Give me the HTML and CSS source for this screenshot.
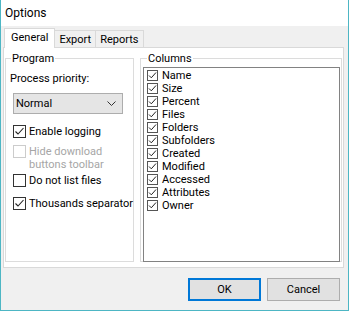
FILE: index.html
```html
<!DOCTYPE html>
<html lang="en">
  <head>
    <meta charset="UTF-8" />
    <meta name="viewport" content="width=device-width, initial-scale=1.0" />
    <link rel="stylesheet" href="styles.css">
  </head>
  <body>
    <div class="window">
      <div class="titlebar">Options</div>

      <div class="client">
        <div class="tabs">
          <div class="tab active">General</div>
          <div class="tab">Export</div>
          <div class="tab">Reports</div>
        </div>

        <div class="page">
          <fieldset class="group program">
            <legend>Program</legend>
            <div class="label">Process priority:</div>
            <div class="combo">
              <span>Normal</span>
              <svg width="9" height="5" viewBox="0 0 9 5"><polyline points="0.5,0.5 4.5,4.5 8.5,0.5" fill="none" stroke="#333" stroke-width="1"/></svg>
            </div>

            <div class="check c-logging">
              <span class="box"><svg width="11" height="11" viewBox="0 0 11 11"><polyline points="1.5,5.5 4,8 9.5,2" fill="none" stroke="#222" stroke-width="1.1"/></svg></span>
              <span>Enable logging</span>
            </div>
            <div class="check disabled c-hide">
              <span class="box"></span>
              <span>Hide download<br>buttons toolbar</span>
            </div>
            <div class="check c-nolist">
              <span class="box"></span>
              <span>Do not list files</span>
            </div>
            <div class="check c-thousands">
              <span class="box"><svg width="11" height="11" viewBox="0 0 11 11"><polyline points="1.5,5.5 4,8 9.5,2" fill="none" stroke="#222" stroke-width="1.1"/></svg></span>
              <span>Thousands separator</span>
            </div>
          </fieldset>

          <fieldset class="group columns">
            <legend>Columns</legend>
            <div class="listbox" id="column-list">
              <!-- filled by the script below -->
            </div>
          </fieldset>
        </div>

        <div class="buttons">
          <button class="btn default">OK</button>
          <button class="btn">Cancel</button>
        </div>
      </div>
    </div>

    <script>
      const columns = ["Name", "Size", "Percent", "Files", "Folders", "Subfolders",
                       "Created", "Modified", "Accessed", "Attributes", "Owner"];
      const list = document.getElementById("column-list");

      columns.forEach(function (name) {
        const item = document.createElement("div");
        item.className = "item";
        item.innerHTML =
          '<span class="box small"><svg width="9" height="9" viewBox="0 0 9 9">' +
          '<polyline points="1,4.5 3.3,6.8 8,1.5" fill="none" stroke="#222" stroke-width="1"/></svg></span>' +
          "<span>" + name + "</span>";
        list.appendChild(item);
      });
    </script>
  </body>
</html>
```

FILE: styles.css
```css
body {
  margin: 0;
  padding: 0;
  font-family: "Segoe UI", Roboto, "Liberation Sans", sans-serif;
  font-size: 11px;
  color: #000;
}

.window {
  width: 349px;
  height: 311px;
  box-sizing: border-box;
  border: 1px solid #4db6c4;
  border-top: none;
  display: flex;
  flex-direction: column;
  background-color: #f0f0f0;
}

.titlebar {
  height: 26px;
  line-height: 26px;
  padding-left: 4px;
  font-size: 12px;
  background-color: #fff;
}

.client {
  flex: 1;
}

/* tab strip */
.tabs {
  display: flex;
  align-items: flex-end;
  height: 20px;
  margin-top: 1px;
  margin-left: 3px;
}

.tab {
  height: 17px;
  line-height: 17px;
  box-sizing: border-box;
  padding: 0 4px;
  border: 1px solid #d9d9d9;
  border-bottom: none;
  margin-left: -1px;
}

.tab.active {
  height: 20px;
  line-height: 18px;
  padding: 0 6px;
  margin-left: 0;
  margin-bottom: -1px;
  background-color: #fff;
  position: relative;
  z-index: 1;
}

.page {
  height: 221px;
  box-sizing: border-box;
  margin: 0 4px 0 2px;
  padding: 3px 1px 5px 1px;
  background-color: #fff;
  border: 1px solid #d9d9d9;
  display: flex;
  gap: 6px;
}

/* group boxes */
.group {
  margin: 0;
  border: 1px solid #dcdcdc;
  box-sizing: border-box;
  min-width: 0;
}

.group legend {
  padding: 0 1px;
  line-height: 15px;
}

.program {
  width: 129px;
  padding: 0 4px;
}

.program legend {
  margin-left: 1px;
}

.columns {
  width: 202px;
  padding: 0 1px 0 2px;
}

.columns legend {
  margin-left: 4px;
}

.label {
  margin-top: 5px;
  line-height: 15px;
}

.combo {
  margin: 7px 0 0 3px;
  width: 110px;
  height: 21px;
  box-sizing: border-box;
  border: 1px solid #adadad;
  background-color: #e5e5e5;
  display: flex;
  align-items: center;
  justify-content: space-between;
  padding: 0 6px 0 2px;
}

/* checkboxes */
.check {
  display: flex;
  align-items: flex-start;
  gap: 3px;
  margin-left: 3px;
  line-height: 15px;
  white-space: nowrap;
}

.box {
  width: 13px;
  height: 13px;
  box-sizing: border-box;
  margin-top: 1px;
  border: 1px solid #333;
  background-color: #fff;
  display: flex;
  align-items: center;
  justify-content: center;
  flex-shrink: 0;
}

.check.disabled {
  color: #a6a6a6;
  line-height: 13px;
}

.check.disabled .box {
  border-color: #cccccc;
  margin-top: 0;
}

.c-logging {
  margin-top: 10px;
}

.c-hide {
  margin-top: 6px;
}

.c-nolist {
  margin-top: 2px;
}

.c-thousands {
  margin-top: 8px;
}

/* column list */
.listbox {
  margin-top: 1px;
  height: 195px;
  box-sizing: border-box;
  border: 1px solid #828282;
  padding-top: 1px;
}

.item {
  display: flex;
  align-items: flex-start;
  gap: 4px;
  height: 13px;
  line-height: 13px;
  padding-left: 3px;
}

.box.small {
  width: 11px;
  height: 11px;
  border-color: #555;
}

/* bottom buttons */
.buttons {
  display: flex;
  justify-content: flex-end;
  gap: 6px;
  margin-top: 10px;
  padding-right: 8px;
}

.btn {
  width: 73px;
  height: 23px;
  box-sizing: border-box;
  border: 1px solid #adadad;
  background-color: #e1e1e1;
  font-family: inherit;
  font-size: 11px;
  color: #000;
  padding: 0;
}

.btn.default {
  border: 2px solid #0078d7;
}
```
